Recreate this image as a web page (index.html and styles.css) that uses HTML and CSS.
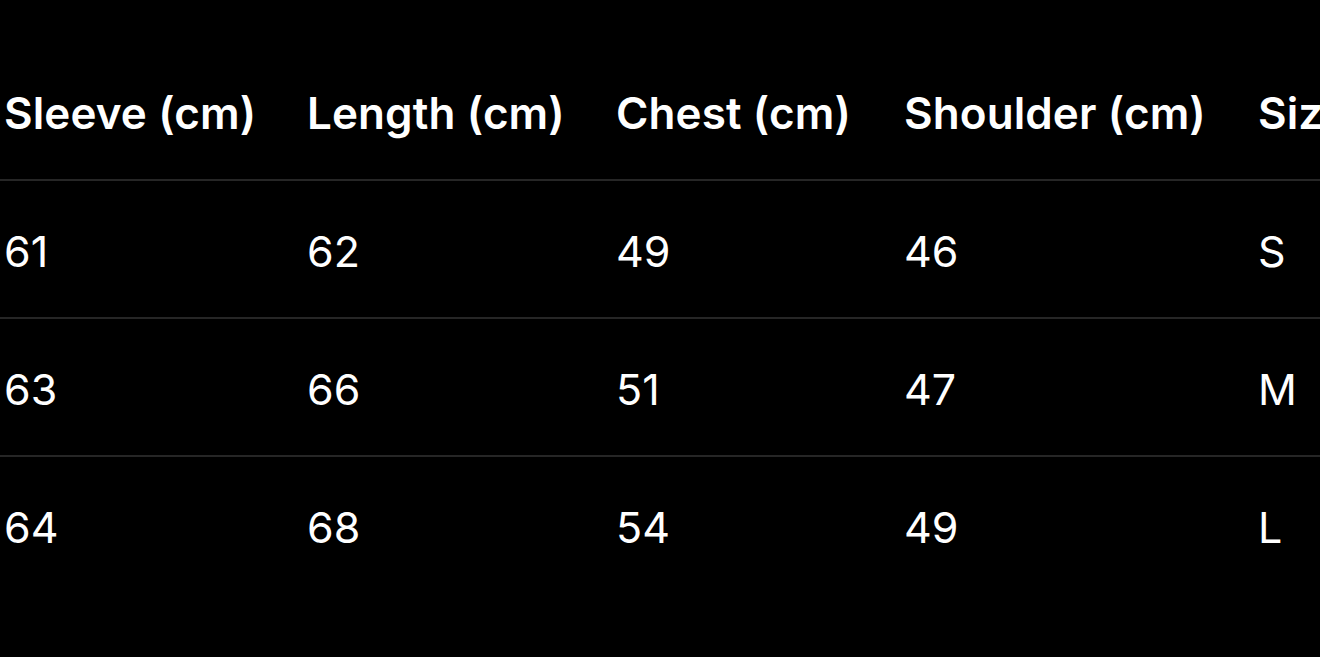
FILE: index.html
```html
<!DOCTYPE html>
<html>
<head>
<meta charset="utf-8">
<link rel="stylesheet" href="styles.css">
</head>
<body>
<div class="viewport">
  <div class="table">
    <div class="row head">
      <div class="cell c1">Sleeve (cm)</div>
      <div class="cell c2">Length (cm)</div>
      <div class="cell c3">Chest (cm)</div>
      <div class="cell c4">Shoulder (cm)</div>
      <div class="cell c5">Size</div>
    </div>
    <div class="row">
      <div class="cell c1">61</div>
      <div class="cell c2">62</div>
      <div class="cell c3">49</div>
      <div class="cell c4">46</div>
      <div class="cell c5">S</div>
    </div>
    <div class="row">
      <div class="cell c1">63</div>
      <div class="cell c2">66</div>
      <div class="cell c3">51</div>
      <div class="cell c4">47</div>
      <div class="cell c5">M</div>
    </div>
    <div class="row last">
      <div class="cell c1">64</div>
      <div class="cell c2">68</div>
      <div class="cell c3">54</div>
      <div class="cell c4">49</div>
      <div class="cell c5">L</div>
    </div>
  </div>
</div>
</body>
</html>
```
FILE: styles.css
```css
html, body {
  margin: 0;
  padding: 0;
  background: #000;
}
.viewport {
  width: 1320px;
  height: 657px;
  overflow: hidden;
  background: #000;
}
.table {
  padding-top: 43px;
  width: 1600px;
  font-family: Inter, "Noto Sans", sans-serif;
  color: #fff;
}
.row {
  display: grid;
  grid-template-columns: 307px 309px 288px 354px 200px;
  height: 136px;
  align-items: center;
  border-bottom: 2px solid #262626;
  font-size: 43px;
  font-weight: 400;
}
.row .cell {
  padding-top: 3px;
}
.row.last {
  border-bottom: none;
}
.head {
  font-size: 44px;
  font-weight: 600;
  letter-spacing: 0.1px;
}
.head .cell {
  padding-top: 4px;
}
.cell {
  white-space: nowrap;
}
.c1 {
  padding-left: 4px;
}
```
